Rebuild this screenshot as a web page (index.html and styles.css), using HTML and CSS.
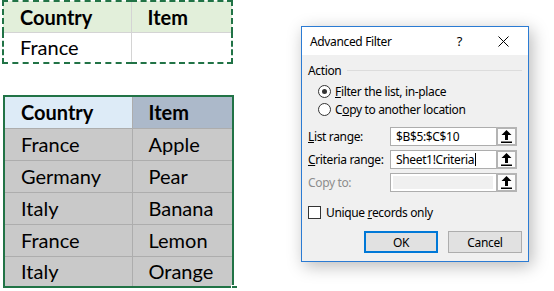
FILE: index.html
```html
<!DOCTYPE html>
<html>
<head>
  <link rel="stylesheet" href="styles.css">
</head>
<body>
  <div class="sheet">
    <table class="criteria">
      <tr>
        <th class="col-a">Country</th>
        <th class="col-b">Item</th>
      </tr>
      <tr>
        <td>France</td>
        <td></td>
      </tr>
    </table>

    <div class="list-wrap">
      <table class="list">
        <tr>
          <th class="col-a head-a">Country</th>
          <th class="col-b head-b">Item</th>
        </tr>
        <tr><td>France</td><td>Apple</td></tr>
        <tr><td>Germany</td><td>Pear</td></tr>
        <tr><td>Italy</td><td>Banana</td></tr>
        <tr><td>France</td><td>Lemon</td></tr>
        <tr class="last"><td>Italy</td><td>Orange</td></tr>
      </table>
      <div class="fill-handle"></div>
    </div>
  </div>

  <div class="dialog">
    <div class="titlebar">
      <span class="title">Advanced Filter</span>
      <span class="help">?</span>
      <svg class="close" width="11" height="11" viewBox="0 0 11 11">
        <path d="M0.5 0.5 L10.5 10.5 M10.5 0.5 L0.5 10.5" stroke="#000" stroke-width="1" fill="none"/>
      </svg>
    </div>

    <div class="body">
      <div class="group-label">
        <span>Action</span>
        <div class="rule"></div>
      </div>

      <div class="radio-row first">
        <span class="radio checked"></span>
        <span><u>F</u>ilter the list, in-place</span>
      </div>
      <div class="radio-row">
        <span class="radio"></span>
        <span>C<u>o</u>py to another location</span>
      </div>

      <div class="field first-field">
        <label><u>L</u>ist range:</label>
        <div class="ref-box">
          <div class="ref-input">$B$5:$C$10</div>
          <div class="ref-btn">
            <svg width="11" height="13" viewBox="0 0 11 13"><path d="M5.5 0 L10.5 5 L7 5 L7 10 L4 10 L4 5 L0.5 5 Z" fill="#000"/><rect x="0" y="11.5" width="11" height="1.5" fill="#000"/></svg>
          </div>
        </div>
      </div>
      <div class="field">
        <label><u>C</u>riteria range:</label>
        <div class="ref-box">
          <div class="ref-input">Sheet1!Criteria<span class="caret"></span></div>
          <div class="ref-btn">
            <svg width="11" height="13" viewBox="0 0 11 13"><path d="M5.5 0 L10.5 5 L7 5 L7 10 L4 10 L4 5 L0.5 5 Z" fill="#000"/><rect x="0" y="11.5" width="11" height="1.5" fill="#000"/></svg>
          </div>
        </div>
      </div>
      <div class="field disabled">
        <label>Copy to:</label>
        <div class="ref-box">
          <div class="ref-input"><div class="ref-inner"></div></div>
          <div class="ref-btn">
            <svg width="11" height="13" viewBox="0 0 11 13"><path d="M5.5 0 L10.5 5 L7 5 L7 10 L4 10 L4 5 L0.5 5 Z" fill="#000"/><rect x="0" y="11.5" width="11" height="1.5" fill="#000"/></svg>
          </div>
        </div>
      </div>

      <div class="check-row">
        <span class="checkbox"></span>
        <span>Unique <u>r</u>ecords only</span>
      </div>

      <div class="buttons">
        <div class="btn default">OK</div>
        <div class="btn">Cancel</div>
      </div>
    </div>
  </div>
</body>
</html>
```

FILE: styles.css
```css
body {
  margin: 0;
  background: #fff;
  display: flex;
  align-items: flex-start;
}

/* spreadsheet side */
.sheet {
  font-family: Lato, "Liberation Sans", sans-serif;
  font-size: 20px;
  color: #000;
  margin-left: 2px;
}
table {
  border-collapse: collapse;
  table-layout: fixed;
}
th {
  font-weight: bold;
  text-align: left;
}
th, td {
  height: 31px;
  padding: 0 0 0 16px;
  box-sizing: border-box;
}
.col-a {
  width: 128px;
}
.col-b {
  width: 101px;
}
.criteria {
  border: 2px dashed #217346;
}
.criteria th {
  background-color: #e2efda;
  border-right: 1px solid #d4d4d4;
  border-bottom: 1px solid #d4d4d4;
}
.criteria td {
  border-right: 1px solid #d4d4d4;
}
.list-wrap {
  position: relative;
  margin-top: 31px;
  margin-left: 1px;
}
.list {
  border: 2px solid #217346;
}
.list td {
  background-color: #c9c9c9;
  border: 1px solid #adadad;
  height: 32px;
}
.list th {
  height: 32px;
  border: 1px solid #adadad;
}
.list .last td {
  height: 31px;
}
.head-a {
  background-color: #ddebf7;
}
.head-b {
  background-color: #acb9ca;
}
.fill-handle {
  position: absolute;
  right: -4px;
  bottom: -4px;
  width: 5px;
  height: 5px;
  background: #217346;
  border: 1px solid #fff;
}

/* dialog */
.dialog {
  font-family: "Noto Sans", "Liberation Sans", sans-serif;
  font-size: 12px;
  letter-spacing: -0.35px;
  color: #000;
  margin: 26px 0 0 67px;
  width: 226px;
  border: 1px solid #2b7bd3;
  background: #f0f0f0;
  box-shadow: 3px 4px 16px rgba(0, 0, 0, 0.28);
}
.titlebar {
  background: #fff;
  height: 28px;
  display: flex;
  align-items: center;
  padding-left: 8px;
}
.title {
  flex: 1;
}
.help {
  font-size: 13px;
  margin-right: 36px;
}
.close {
  margin-right: 19px;
}
.body {
  padding: 0 6px 0 6px;
}
.group-label {
  display: flex;
  align-items: center;
  height: 14px;
  margin-top: 8px;
}
.rule {
  flex: 1;
  height: 1px;
  background: #dcdcdc;
  margin-left: 6px;
}
.radio-row {
  display: flex;
  align-items: center;
  height: 18px;
  padding-left: 10px;
}
.radio-row.first {
  margin-top: 5px;
}
.radio {
  width: 11px;
  height: 11px;
  border: 1px solid #333;
  border-radius: 50%;
  background: #fff;
  margin-right: 4px;
  position: relative;
  box-sizing: content-box;
}
.radio.checked::after {
  content: "";
  position: absolute;
  left: 3px;
  top: 3px;
  width: 5px;
  height: 5px;
  border-radius: 50%;
  background: #333;
}
.field {
  display: flex;
  align-items: center;
  height: 19px;
  margin-top: 4px;
}
.field.first-field {
  margin-top: 9px;
}
.field label {
  width: 82px;
}
.field.disabled label {
  color: #8d8d8d;
}
.ref-box {
  display: flex;
  height: 19px;
}
.ref-input {
  width: 106px;
  height: 19px;
  box-sizing: border-box;
  background: #fff;
  border: 1px solid #adadad;
  border-right: none;
  padding-left: 5px;
  line-height: 17px;
  display: flex;
  align-items: center;
}
.caret {
  width: 1px;
  height: 13px;
  background: #000;
  margin-left: 1px;
}
.disabled .ref-input {
  padding: 2px 0 2px 2px;
}
.ref-inner {
  width: 100px;
  height: 13px;
  background: #f0f0f0;
}
.ref-btn {
  width: 21px;
  height: 19px;
  box-sizing: border-box;
  border: 2px solid #b4b4b4;
  background: #fcfcfc;
  display: flex;
  align-items: center;
  justify-content: center;
}
.check-row {
  display: flex;
  align-items: center;
  height: 14px;
  margin-top: 13px;
}
.checkbox {
  width: 11px;
  height: 11px;
  border: 1px solid #333;
  background: #fff;
  margin-right: 5px;
}
.buttons {
  display: flex;
  justify-content: flex-end;
  gap: 10px;
  margin-top: 12px;
  padding-bottom: 8px;
}
.btn {
  width: 74px;
  height: 22px;
  box-sizing: border-box;
  border: 1px solid #adadad;
  background: #e1e1e1;
  display: flex;
  align-items: center;
  justify-content: center;
}
.btn.default {
  border: 2px solid #0078d7;
}
```
